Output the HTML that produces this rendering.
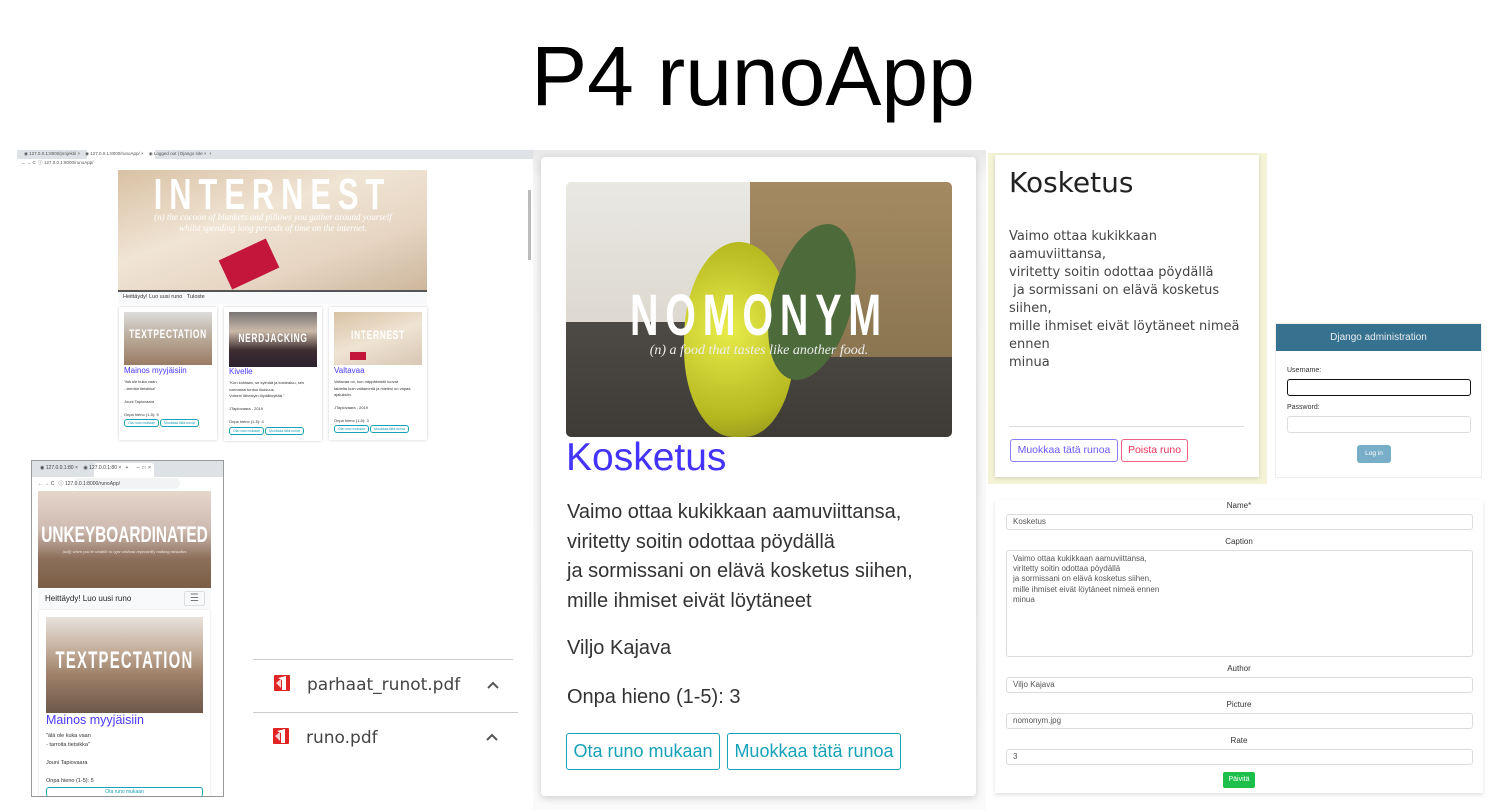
<!DOCTYPE html>
<html><head><meta charset="utf-8"><style>
*{box-sizing:border-box;margin:0;padding:0}
body{width:1506px;height:812px;background:#fff;position:relative;overflow:hidden;font-family:"Liberation Sans",sans-serif;color:#333}
.a{position:absolute}
.t{white-space:nowrap}
.btn{position:absolute;border:1px solid #17a2b8;color:#17a2b8;border-radius:3px;text-align:center;white-space:nowrap;overflow:hidden}
.inp{position:absolute;left:1006px;width:467px;border:1px solid #dcdcdc;border-radius:3px;font-size:8px;color:#555;padding-left:6px}
.lbl{position:absolute;left:995px;width:488px;text-align:center;font-size:8px;color:#333}
.ov{overflow:hidden}
.nar{font-weight:bold;transform:scaleX(.7);transform-origin:center;display:flex;justify-content:center}
</style></head><body>

<div class="a t" style="left:0;width:1506px;top:28px;text-align:center;font-size:84px;color:#000;line-height:96px">P4 runoApp</div>

<!-- Screenshot 1 -->
<div class="a" style="left:17px;top:150px;width:516px;height:292px;background:#fff"></div>
<div class="a" style="left:17px;top:150px;width:516px;height:9px;background:#dee1e6"></div>
<div class="a" style="left:87px;top:150px;width:68px;height:9px;background:#fff"></div>
<div class="a t" style="left:24px;top:151px;font-size:4.5px;color:#555">◉ 127.0.0.1:8000/projekti/ ×&nbsp;&nbsp;&nbsp;&nbsp;◉ 127.0.0.1:8000/runoApp/ ×&nbsp;&nbsp;&nbsp;&nbsp;◉ Logged out | Django site ×&nbsp;&nbsp;+</div>
<div class="a t" style="left:21px;top:160px;font-size:4.5px;color:#555">← → C&nbsp;&nbsp;ⓘ 127.0.0.1:8000/runoApp/</div>
<div class="a ov" style="left:118px;top:170px;width:309px;height:120px;background:linear-gradient(160deg,#d8c1a3,#f0e4d4 40%,#e6d5c2 70%,#cdb79d)">
 <div class="a" style="left:105px;top:78px;width:52px;height:32px;background:#c4163a;transform:rotate(-25deg)"></div>
 <div class="a t nar" style="left:0;width:309px;top:0px;font-size:44px;color:#fff;letter-spacing:10px">INTERNEST</div>
 <div class="a" style="left:30px;width:250px;top:42px;text-align:center;font-family:'Liberation Serif',serif;font-style:italic;font-size:9px;color:#fff;line-height:11px">(n) the cocoon of blankets and pillows you gather around yourself whilst spending long periods of time on the internet.</div>
</div>
<div class="a" style="left:118px;top:290px;width:309px;height:2px;background:#555"></div>
<div class="a" style="left:118px;top:292px;width:309px;height:12px;background:#f8f9fa"></div>
<div class="a t" style="left:123px;top:294px;font-size:5.5px;color:#333">Heittäydy! Luo uusi runo&nbsp;&nbsp;&nbsp;Tuloste</div>
<div class="a" style="left:528px;top:190px;width:3px;height:70px;background:#bbb"></div>

<div class="a" style="left:119px;top:307px;width:98px;height:133px;background:#fff;box-shadow:0 0 3px rgba(0,0,0,.2)"></div>
<div class="a ov" style="left:124px;top:312px;width:88px;height:53px;background:linear-gradient(180deg,#ddd 0,#bfb3a3 40%,#9a7b63)">
<div class="a t nar" style="left:0;width:88px;top:15px;color:#fff;font-size:12px;letter-spacing:1px">TEXTPECTATION</div></div>
<div class="a t" style="left:124px;top:366px;font-size:8px;color:#4a3aff">Mainos myyjäisiin</div>
<div class="a" style="left:124px;top:379px;font-size:4px;color:#333;line-height:6.5px">"älä ole kuka vaan<br>- tarroita tietsikka"<br><br>Jouni Tapiovaara<br><br>Onpa hieno (1-5): 5</div>
<div class="btn" style="left:124px;top:419px;width:35px;height:8px;font-size:3.5px;line-height:7px">Ota runo mukaan</div>
<div class="btn" style="left:160px;top:419px;width:39px;height:8px;font-size:3.5px;line-height:7px">Muokkaa tätä runoa</div>

<div class="a" style="left:224px;top:307px;width:98px;height:134px;background:#fff;box-shadow:0 0 3px rgba(0,0,0,.2)"></div>
<div class="a ov" style="left:229px;top:312px;width:88px;height:55px;background:linear-gradient(180deg,#7a7575,#c9b9a8 35%,#3d2c30 70%,#2c2230)">
<div class="a t nar" style="left:0;width:88px;top:19px;color:#fff;font-size:12px;letter-spacing:1px">NERDJACKING</div></div>
<div class="a t" style="left:229px;top:367px;font-size:8px;color:#4a3aff">Kivelle</div>
<div class="a" style="left:229px;top:380px;font-size:4px;color:#333;line-height:6.5px">"Kun kohtaan, se kylmää ja kostealuu, sen<br>voimassa tuntuu ikuisuus.<br>Voiseni läheisyin löydälloyttää."<br><br>JTapiovaara - 2019<br><br>Onpa hieno (1-5): 4</div>
<div class="btn" style="left:229px;top:427px;width:35px;height:8px;font-size:3.5px;line-height:7px">Ota runo mukaan</div>
<div class="btn" style="left:265px;top:427px;width:39px;height:8px;font-size:3.5px;line-height:7px">Muokkaa tätä runoa</div>

<div class="a" style="left:329px;top:307px;width:98px;height:133px;background:#fff;box-shadow:0 0 3px rgba(0,0,0,.2)"></div>
<div class="a ov" style="left:334px;top:312px;width:88px;height:53px;background:linear-gradient(160deg,#d8c2a4,#efe3d3 50%,#d8c7b4)">
<div class="a" style="left:16px;top:40px;width:16px;height:8px;background:#c4163a"></div>
<div class="a t nar" style="left:0;width:88px;top:16px;color:#fff;font-size:12px;letter-spacing:1px">INTERNEST</div></div>
<div class="a t" style="left:334px;top:366px;font-size:8px;color:#4a3aff">Valtavaa</div>
<div class="a" style="left:334px;top:379px;font-size:4px;color:#333;line-height:6.5px">Valtavaa on, kun näppäimistö luovat<br>taidetta kuin valtameriä ja mielesi on vapaa<br>ajatuksiin.<br><br>JTapiovaara - 2019<br><br>Onpa hieno (1-5): 3</div>
<div class="btn" style="left:334px;top:425px;width:35px;height:8px;font-size:3.5px;line-height:7px">Ota runo mukaan</div>
<div class="btn" style="left:370px;top:425px;width:39px;height:8px;font-size:3.5px;line-height:7px">Muokkaa tätä runoa</div>

<!-- Screenshot 2 -->
<div class="a" style="left:31px;top:460px;width:193px;height:337px;background:#fff;border:1px solid #999"></div>
<div class="a" style="left:32px;top:461px;width:191px;height:16px;background:#dee1e6"></div>
<div class="a" style="left:94px;top:463px;width:60px;height:14px;background:#fff;border-radius:3px 3px 0 0"></div>
<div class="a t" style="left:40px;top:465px;font-size:5px;color:#444">◉ 127.0.0.1:80 ×&nbsp;&nbsp;&nbsp;&nbsp;◉ 127.0.0.1:80 ×&nbsp;&nbsp;&nbsp;+&nbsp;&nbsp;&nbsp;&nbsp;&nbsp;&nbsp;–&nbsp;&nbsp;□&nbsp;&nbsp;×</div>
<div class="a" style="left:74px;top:478px;width:106px;height:11px;background:#f1f3f4;border-radius:6px"></div>
<div class="a t" style="left:38px;top:480px;font-size:5px;color:#444">← → C&nbsp;&nbsp;&nbsp;ⓘ 127.0.0.1:8000/runoApp/</div>
<div class="a ov" style="left:38px;top:491px;width:173px;height:97px;background:linear-gradient(180deg,#e6d6cb 0,#cdbab0 40%,#8c6f5a 70%,#7b5e46)">
<div class="a t nar" style="left:0;width:173px;top:31px;color:#fff;font-size:22px">UNKEYBOARDINATED</div>
<div class="a t" style="left:0;width:173px;top:58px;text-align:center;color:#f0e8e0;font-family:'Liberation Serif',serif;font-style:italic;font-size:4.5px">(adj) when you're unable to type without repeatedly making mistakes</div></div>
<div class="a" style="left:38px;top:589px;width:173px;height:20px;background:#f8f9fa"></div>
<div class="a t" style="left:45px;top:594px;font-size:8px;color:#222">Heittäydy! Luo uusi runo</div>
<div class="a" style="left:184px;top:591px;width:21px;height:15px;border:1px solid #ddd;border-radius:2px;font-size:10px;text-align:center;line-height:13px;color:#777">☰</div>
<div class="a" style="left:39px;top:610px;width:171px;height:186px;background:#fff;box-shadow:0 0 2px rgba(0,0,0,.15)"></div>
<div class="a ov" style="left:46px;top:617px;width:157px;height:96px;background:linear-gradient(180deg,#e8e2dc 0,#c9b5a3 30%,#9f8169 60%,#6d584a)">
<div class="a t nar" style="left:0;width:157px;top:30px;color:#fff;font-size:24px;letter-spacing:2px;transform:scaleX(.62)">TEXTPECTATION</div></div>
<div class="a t" style="left:46px;top:713px;font-size:12.5px;color:#4a3aff">Mainos myyjäisiin</div>
<div class="a" style="left:46px;top:732px;font-size:5.5px;color:#333;line-height:9px">"älä ole kuka vaan<br>- tarroita tietsikka"<br><br>Jouni Tapiovaara<br><br>Onpa hieno (1-5): 5</div>
<div class="btn" style="left:46px;top:787px;width:157px;height:10px;font-size:5px;line-height:9px;border-bottom:none">Ota runo mukaan</div>

<!-- PDF list -->
<div class="a" style="left:253px;top:659px;width:260px;height:1px;background:#ccc"></div>
<div class="a" style="left:253px;top:712px;width:265px;height:1px;background:#ccc"></div>
<svg class="a" style="left:273px;top:674px" width="18" height="18" viewBox="0 0 18 18"><rect x="1" y="1" width="16" height="16" rx="1" fill="#e02424"/><path d="M5 4 L13 2 L13 16 L9 16 L9 6 Z" fill="#fff"/><path d="M3 9 L8 5 L8 14 Z" fill="#fff" opacity=".8"/></svg>
<svg class="a" style="left:272px;top:727px" width="18" height="18" viewBox="0 0 18 18"><rect x="1" y="1" width="16" height="16" rx="1" fill="#e02424"/><path d="M5 4 L13 2 L13 16 L9 16 L9 6 Z" fill="#fff"/><path d="M3 9 L8 5 L8 14 Z" fill="#fff" opacity=".8"/></svg>
<div class="a t" style="left:307px;top:675px;font-size:17px;color:#444;font-family:'DejaVu Sans',sans-serif">parhaat_runot.pdf</div>
<div class="a t" style="left:306px;top:728px;font-size:17px;color:#444;font-family:'DejaVu Sans',sans-serif">runo.pdf</div>
<svg class="a" style="left:486px;top:680px" width="14" height="10"><path d="M2 8 L7 3 L12 8" stroke="#555" stroke-width="2" fill="none"/></svg>
<svg class="a" style="left:485px;top:732px" width="14" height="10"><path d="M2 8 L7 3 L12 8" stroke="#555" stroke-width="2" fill="none"/></svg>

<!-- Middle card -->
<div class="a" style="left:533px;top:150px;width:453px;height:660px;background:linear-gradient(180deg,#e8e8e8 0,#f6f6f6 30px,#fafafa 100%)"></div>
<div class="a" style="left:541px;top:157px;width:435px;height:639px;background:#fff;border-radius:4px;box-shadow:0 2px 8px rgba(0,0,0,.18)"></div>
<div class="a" style="left:566px;top:182px;width:386px;height:255px;border-radius:5px;overflow:hidden;background:linear-gradient(180deg,#e9e8e3 0,#ddd9d0 55%,#4d4a45 55%,#3e3b36 100%)">
 <div class="a" style="left:184px;top:0;width:202px;height:175px;background:linear-gradient(180deg,#a48a62,#8a7550)"></div>
 <div class="a" style="left:118px;top:60px;width:110px;height:195px;border-radius:50% 50% 45% 45%;background:radial-gradient(circle at 40% 45%,#e8ec4a,#b5b81f 70%,#8a8a20)"></div>
 <div class="a" style="left:206px;top:40px;width:80px;height:160px;border-radius:50%;background:#4d6a3a;transform:rotate(15deg)"></div>
 <div class="a t nar" style="left:0;width:386px;top:104px;font-size:58px;line-height:60px;color:#fff;letter-spacing:10px;transform:scaleX(.68)">NOMONYM</div>
 <div class="a t" style="left:0;width:386px;top:161px;text-align:center;font-family:'Liberation Serif',serif;font-style:italic;font-size:14px;color:#eee">(n) a food that tastes like another food.</div>
</div>
<div class="a t" style="left:566px;top:436px;font-size:39px;color:#4433ff">Kosketus</div>
<div class="a" style="left:567px;top:498px;font-size:20px;color:#333;line-height:29.5px">Vaimo ottaa kukikkaan aamuviittansa,<br>viritetty soitin odottaa pöydällä<br>ja sormissani on elävä kosketus siihen,<br>mille ihmiset eivät löytäneet</div>
<div class="a t" style="left:567px;top:637px;font-size:20px;color:#333">Viljo Kajava</div>
<div class="a t" style="left:567px;top:686px;font-size:20px;color:#333">Onpa hieno (1-5): 3</div>
<div class="btn" style="left:566px;top:733px;width:154px;height:37px;font-size:18px;line-height:35px">Ota runo mukaan</div>
<div class="btn" style="left:727px;top:733px;width:174px;height:37px;font-size:18px;line-height:35px">Muokkaa tätä runoa</div>

<!-- Kosketus hand-font panel -->
<div class="a" style="left:988px;top:153px;width:279px;height:331px;background:#f4f3d6"></div>
<div class="a" style="left:995px;top:155px;width:264px;height:322px;background:#fff;box-shadow:0 1px 4px rgba(0,0,0,.15)"></div>
<div class="a t" style="left:1009px;top:166px;font-size:28px;color:#222;font-family:'DejaVu Sans',sans-serif">Kosketus</div>
<div class="a" style="left:1009px;top:228px;font-size:13px;color:#444;line-height:18px;font-family:'DejaVu Sans',sans-serif;white-space:nowrap">Vaimo ottaa kukikkaan<br>aamuviittansa,<br>viritetty soitin odottaa pöydällä<br>&nbsp;ja sormissani on elävä kosketus<br>siihen,<br>mille ihmiset eivät löytäneet nimeä<br>ennen<br>minua</div>
<div class="a" style="left:1009px;top:426px;width:235px;height:1px;background:#ddd"></div>
<div class="a t" style="left:1010px;top:439px;width:108px;height:23px;border:1px solid #8a80ff;color:#6a5aff;border-radius:3px;font-size:10.5px;line-height:21px;text-align:center">Muokkaa tätä runoa</div>
<div class="a t" style="left:1121px;top:439px;width:67px;height:23px;border:1px solid #f06080;color:#e8325a;border-radius:3px;font-size:10.5px;line-height:21px;text-align:center">Poista runo</div>

<!-- Django -->
<div class="a" style="left:1275px;top:323px;width:207px;height:155px;background:#fff;border:1px solid #eee"></div>
<div class="a t" style="left:1276px;top:324px;width:205px;height:27px;background:#36718f;color:#e8eef2;font-size:10px;line-height:27px;text-align:center">Django administration</div>
<div class="a t" style="left:1287px;top:367px;font-size:7px;color:#333">Username:</div>
<div class="a" style="left:1287px;top:379px;width:184px;height:17px;border:1.5px solid #111;border-radius:3px"></div>
<div class="a t" style="left:1287px;top:404px;font-size:7px;color:#333">Password:</div>
<div class="a" style="left:1287px;top:416px;width:184px;height:17px;border:1px solid #ddd;border-radius:3px"></div>
<div class="a t" style="left:1357px;top:445px;width:34px;height:18px;background:#79aec8;color:#fff;font-size:6.5px;line-height:18px;text-align:center;border-radius:3px">Log in</div>

<!-- Form -->
<div class="a" style="left:995px;top:500px;width:488px;height:293px;background:#fff;box-shadow:0 2px 4px rgba(0,0,0,.12)"></div>
<div class="lbl" style="top:501px">Name*</div>
<div class="inp" style="top:514px;height:16px;line-height:14px">Kosketus</div>
<div class="lbl" style="top:537px">Caption</div>
<div class="inp" style="top:550px;height:107px;line-height:10.2px;padding-top:3px">Vaimo ottaa kukikkaan aamuviittansa,<br>viritetty soitin odottaa pöydällä<br>ja sormissani on elävä kosketus siihen,<br>mille ihmiset eivät löytäneet nimeä ennen<br>minua</div>
<div class="lbl" style="top:664px">Author</div>
<div class="inp" style="top:677px;height:16px;line-height:14px">Viljo Kajava</div>
<div class="lbl" style="top:700px">Picture</div>
<div class="inp" style="top:713px;height:16px;line-height:14px">nomonym.jpg</div>
<div class="lbl" style="top:736px">Rate</div>
<div class="inp" style="top:749px;height:16px;line-height:14px">3</div>
<div class="a t" style="left:1223px;top:772px;width:32px;height:16px;background:#1bbf4a;color:#fff;font-size:7px;line-height:16px;text-align:center;border-radius:2px">Päivitä</div>
</body></html>
